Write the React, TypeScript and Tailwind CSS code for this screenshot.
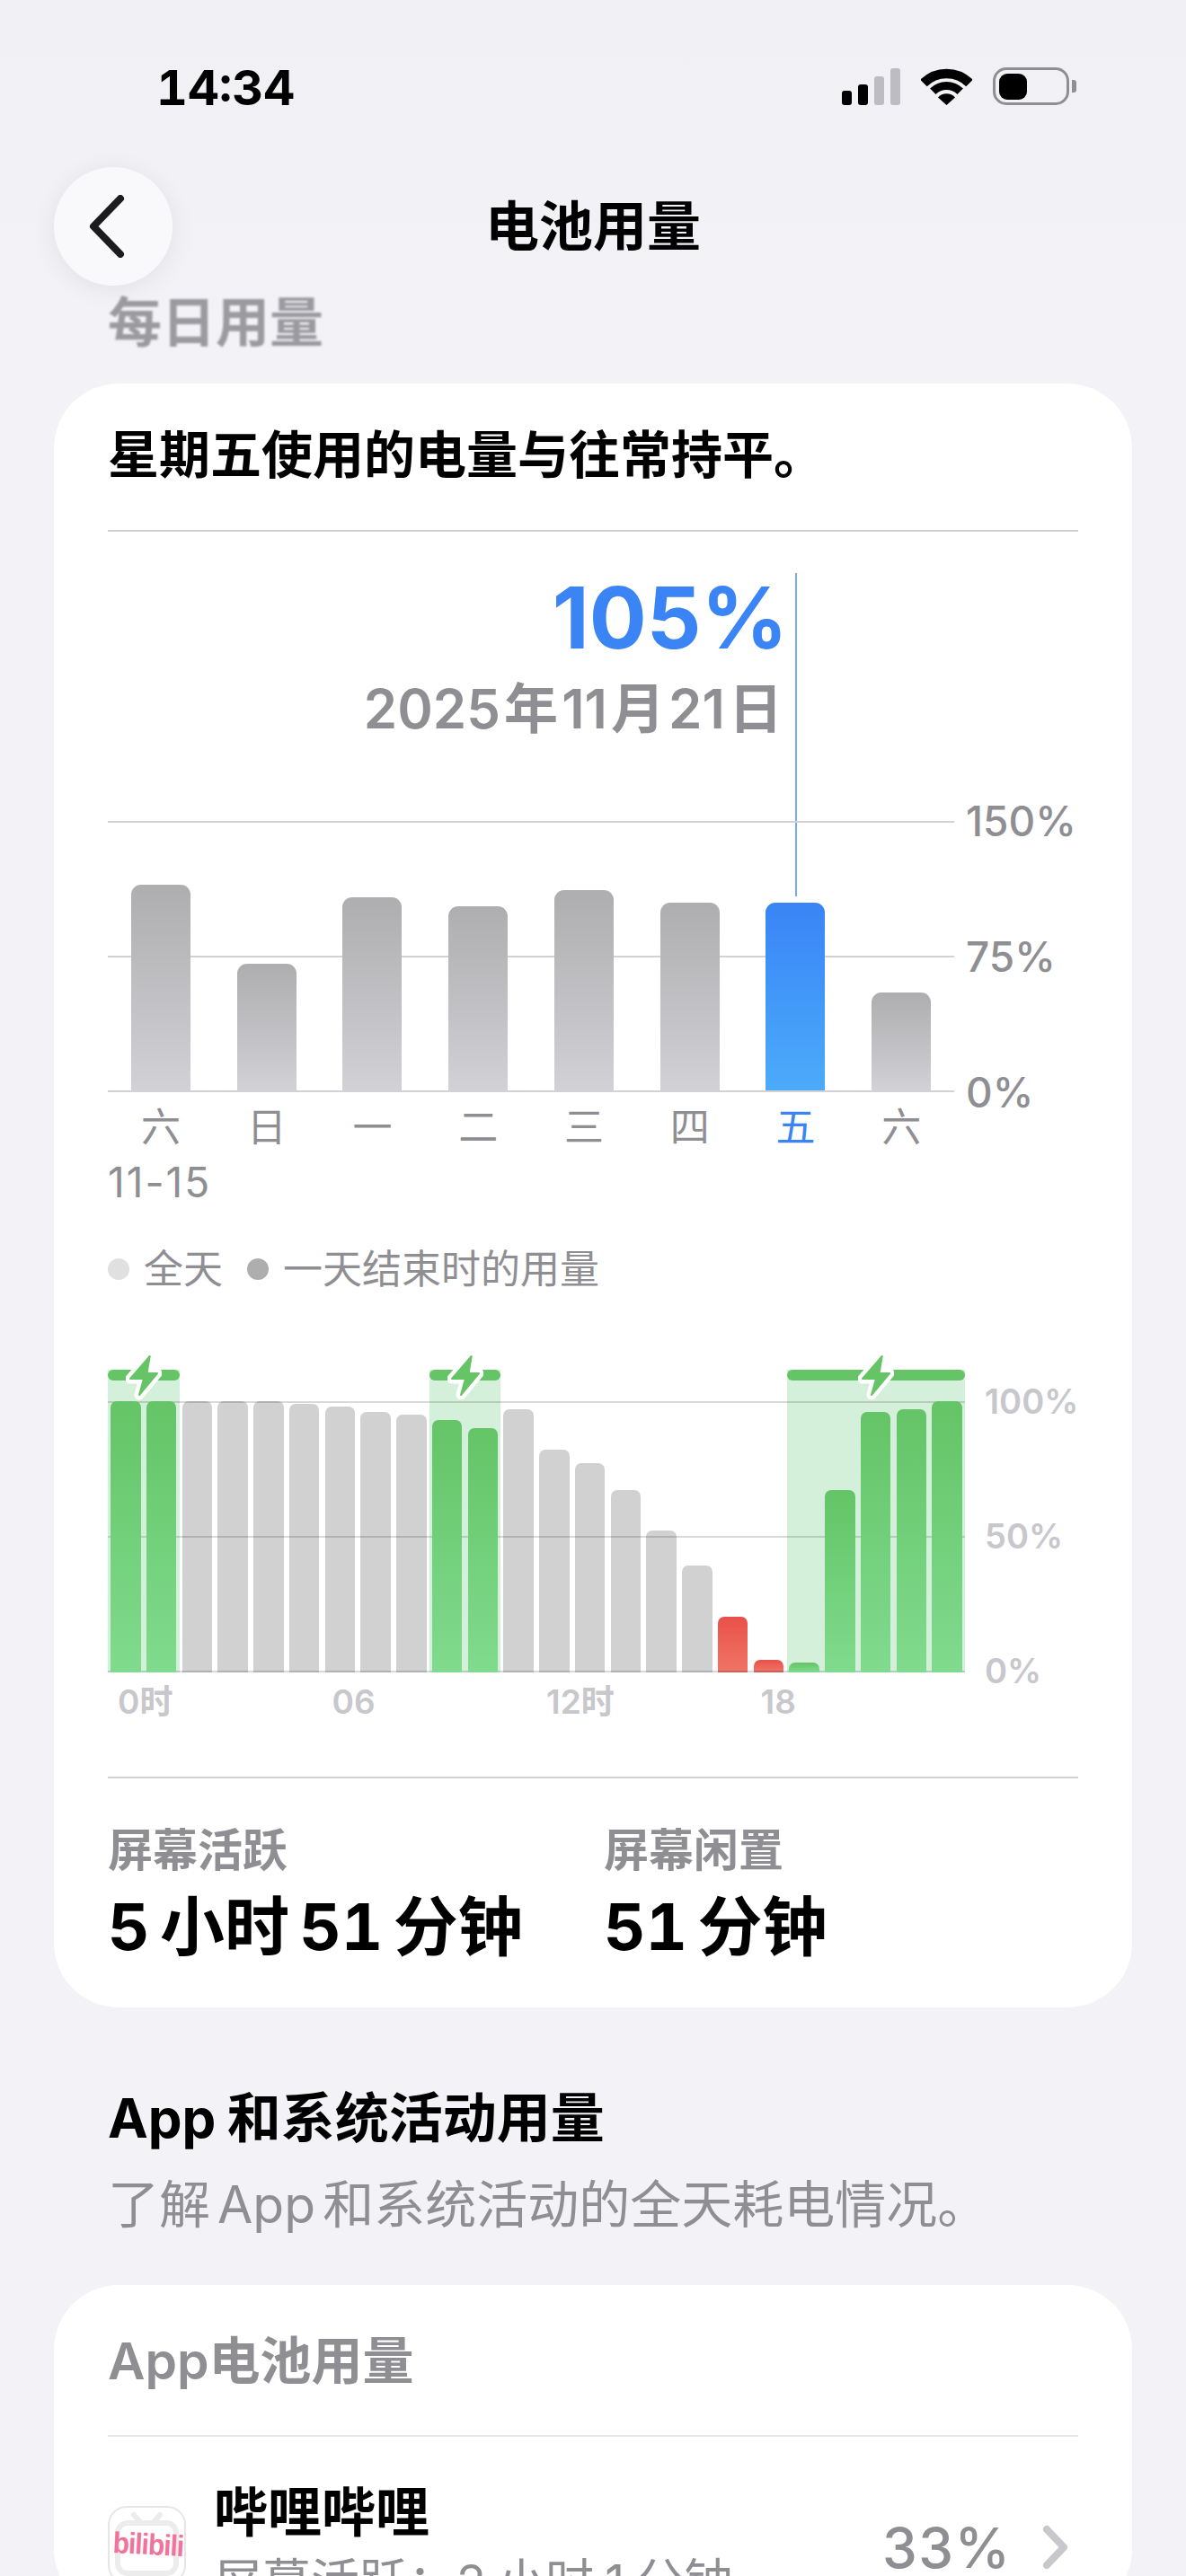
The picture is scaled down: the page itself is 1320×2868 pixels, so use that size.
import React from 'react';

const dayBars = [
  { day: '六', top: 985 },
  { day: '日', top: 1073 },
  { day: '一', top: 999 },
  { day: '二', top: 1009 },
  { day: '三', top: 991 },
  { day: '四', top: 1005 },
  { day: '五', top: 1005, active: true },
  { day: '六', top: 1105 },
];

// kind: g = charging, n = normal, r = low battery
const hourBars: { top: number; kind: 'g' | 'n' | 'r' }[] = [
  { top: 1560, kind: 'g' },
  { top: 1560, kind: 'g' },
  { top: 1560, kind: 'n' },
  { top: 1560, kind: 'n' },
  { top: 1560, kind: 'n' },
  { top: 1563, kind: 'n' },
  { top: 1566, kind: 'n' },
  { top: 1572, kind: 'n' },
  { top: 1575, kind: 'n' },
  { top: 1581, kind: 'g' },
  { top: 1590, kind: 'g' },
  { top: 1569, kind: 'n' },
  { top: 1614, kind: 'n' },
  { top: 1629, kind: 'n' },
  { top: 1659, kind: 'n' },
  { top: 1704, kind: 'n' },
  { top: 1743, kind: 'n' },
  { top: 1800, kind: 'r' },
  { top: 1848, kind: 'r' },
  { top: 1851, kind: 'g' },
  { top: 1659, kind: 'g' },
  { top: 1572, kind: 'g' },
  { top: 1569, kind: 'g' },
  { top: 1560, kind: 'g' },
];

const chargeBands = [
  { left: 0, width: 80 },
  { left: 358, width: 79 },
  { left: 756, width: 198 },
];

function StatusIcons() {
  return (
    <div className="flex items-center">
      <div className="flex items-end gap-[7px] h-[41px]">
        <div className="w-[11px] h-[16px] rounded-[3px] bg-black" />
        <div className="w-[11px] h-[23px] rounded-[3px] bg-black" />
        <div className="w-[11px] h-[32px] rounded-[3px] bg-[#bcbcc2]" />
        <div className="w-[11px] h-[41px] rounded-[3px] bg-[#bcbcc2]" />
      </div>
      <svg width="57" height="42" viewBox="0 0 57 42" className="ml-[23px]">
        <path d="M3 17.5 A36 36 0 0 1 54 17.5" fill="none" stroke="#000" strokeWidth="10.5" />
        <path d="M13.3 26.8 A21.5 21.5 0 0 1 43.7 26.8" fill="none" stroke="#000" strokeWidth="9" />
        <path d="M28.5 42 L19 33.5 A13 13 0 0 1 38 33.5 Z" fill="#000" />
      </svg>
      <div className="ml-[23px] flex items-center">
        <div className="w-[85px] h-[42px] rounded-[15px] border-[3.5px] border-[#8e8e93] flex items-center pl-[4px]">
          <div className="w-[31px] h-[29px] rounded-[9px] bg-black" />
        </div>
        <div className="ml-[3px] w-[5px] h-[14px] rounded-r-[3px] bg-[#8e8e93]" />
      </div>
    </div>
  );
}

function Bolt() {
  return (
    <svg width="40" height="56" viewBox="0 0 40 56">
      <path
        d="M26.7 5 L5 30 L20 30 L15 48 L35 24 L23.5 24 Z"
        fill="#fff"
        stroke="#fff"
        strokeWidth="11"
        strokeLinejoin="round"
      />
      <path
        d="M26.7 5 L5 30 L20 30 L15 48 L35 24 L23.5 24 Z"
        fill="#65c466"
        stroke="#65c466"
        strokeWidth="2"
        strokeLinejoin="round"
      />
    </svg>
  );
}

function DailyChart() {
  return (
    <div className="flex">
      <div className="w-[942px] shrink-0">
        <div className="relative h-[302px] border-b-2 border-[#d1d1d6]">
          <div className="absolute left-0 right-0 top-0 h-[2px] bg-[#d1d1d6]" />
          <div className="absolute left-0 right-0 top-[150px] h-[2px] bg-[#d1d1d6]" />
          <div className="relative grid grid-cols-8 h-[300px] items-end">
            {dayBars.map((bar, i) => (
              <div key={i} className="flex justify-center h-full items-end">
                <div
                  className={
                    bar.active
                      ? 'w-[66px] rounded-t-[11px] bg-linear-to-b from-[#3a84f6] to-[#4cabf9]'
                      : 'w-[66px] rounded-t-[11px] bg-linear-to-b from-[#aeaeb0] to-[#d1d1d6]'
                  }
                  style={{ height: 1214 - bar.top }}
                />
              </div>
            ))}
          </div>
        </div>
        <div className="grid grid-cols-8 mt-[11px] text-[44px] leading-[56px] text-center text-[#8e8e93]">
          {dayBars.map((bar, i) => (
            <div key={i} className={bar.active ? 'text-[#3a84f6]' : ''}>
              {bar.day}
            </div>
          ))}
        </div>
      </div>
      <div className="ml-[13px] h-[302px] flex flex-col justify-between text-[46px] font-medium text-[#8e8e93]">
        <div className="h-0 flex items-center">150%</div>
        <div className="h-0 flex items-center">75%</div>
        <div className="h-0 flex items-center">0%</div>
      </div>
    </div>
  );
}

function HourlyChart() {
  return (
    <div>
      <div className="flex">
        <div className="relative w-[954px] shrink-0 h-[337px]">
          {chargeBands.map((band, i) => (
            <div
              key={i}
              className="absolute top-0 bottom-0 bg-[#d5f0da]"
              style={{ left: band.left, width: band.width }}
            />
          ))}
          {chargeBands.map((band, i) => (
            <div
              key={i}
              className="absolute top-0 h-[12px] rounded-[6px] bg-[#65c466]"
              style={{ left: band.left, width: band.width }}
            />
          ))}
          <div className="absolute left-0 right-0 top-[35px] h-[2px] bg-black/15 z-10" />
          <div className="absolute left-0 right-0 top-[185px] h-[2px] bg-black/15 z-10" />
          <div className="absolute left-0 right-0 bottom-0 h-[2px] bg-black/15 z-10" />
          <div className="absolute left-0 right-0 bottom-0 grid grid-cols-24 h-[302px]">
            {hourBars.map((bar, i) => (
              <div key={i} className="flex justify-center items-end h-full">
                <div
                  className={
                    bar.kind === 'g'
                      ? 'relative z-20 w-[33.5px] rounded-t-[7px] bg-linear-to-b from-[#64c466] to-[#80db8e]'
                      : bar.kind === 'r'
                        ? 'w-[33.5px] rounded-t-[7px] bg-linear-to-b from-[#e9504a] to-[#ef7566]'
                        : 'w-[33.5px] rounded-t-[7px] bg-[#d1d1d1]'
                  }
                  style={{ height: 1862 - bar.top }}
                />
              </div>
            ))}
          </div>
          {chargeBands.map((band, i) => (
            <div
              key={i}
              className="absolute -top-[20px] z-30"
              style={{ left: band.left + band.width / 2 - 20 }}
            >
              <Bolt />
            </div>
          ))}
        </div>
        <div className="ml-[22px] mt-[35px] h-[300px] flex flex-col justify-between text-[38px] font-semibold text-[#c7c7cc]">
          <div className="h-0 flex items-center">100%</div>
          <div className="h-0 flex items-center">50%</div>
          <div className="h-0 flex items-center">0%</div>
        </div>
      </div>
      <div className="grid grid-cols-[repeat(4,238.5px)] mt-[11px] pl-[11px] text-[37px] leading-[44px] font-semibold text-[#c7c7cc]">
        <div>0时</div>
        <div>06</div>
        <div>12时</div>
        <div>18</div>
      </div>
    </div>
  );
}

function BiliIcon() {
  return (
    <div className="relative -mt-[6px] w-[87px] h-[87px] shrink-0 rounded-[21px] border-2 border-[#e6e6e6] bg-white overflow-hidden">
      <svg width="87" height="87" viewBox="0 0 87 87" className="absolute -left-[2px] -top-[2px]">
        <rect x="11" y="19" width="65" height="56" rx="11" fill="none" stroke="#ececec" strokeWidth="6" />
        <path d="M29 10 L37 19 M58 10 L50 19" stroke="#ececec" strokeWidth="6" strokeLinecap="round" />
      </svg>
      <div className="absolute left-[3px] top-[25px] w-[80px] text-center rotate-[3deg] text-[#f0739c] text-[30px] leading-[32px] font-bold tracking-[-1px] [font-family:'Liberation_Sans',sans-serif] scale-y-110">
        bilibili
      </div>
    </div>
  );
}

export default function App() {
  return (
    <div className="w-[1320px] h-[2868px] overflow-hidden bg-[#f2f2f7] [font-family:Inter,'Noto_Sans_CJK_SC',sans-serif]">
      <div className="bg-linear-to-b from-[#f0f0f5] to-[#f2f2f7]">
        {/* Status bar */}
        <div className="h-[186px] pt-[75px] pl-[174px] pr-[122px] flex justify-between items-start">
          <div className="text-[54px] leading-[46px] font-bold tabular-nums text-black">14:34</div>
          <StatusIcons />
        </div>

        {/* Nav */}
        <div className="mx-[60px] grid grid-cols-[132px_1fr_132px] items-center h-[132px]">
          <div className="w-[132px] h-[132px] rounded-full bg-[#f9f9fc] shadow-[0_4px_28px_rgba(0,0,0,0.07)] flex items-center justify-center">
            <svg width="44" height="70" viewBox="0 0 44 70" fill="none" className="mr-[12px]">
              <path d="M36 4 L6 35 L36 66" stroke="#1c1c1e" strokeWidth="8" strokeLinecap="round" strokeLinejoin="round" />
            </svg>
          </div>
          <div className="text-center text-[60px] leading-[70px] font-bold text-black">电池用量</div>
        </div>

        <div className="px-[120px] text-[60px] leading-[82px] font-bold text-[#9a9a9f] blur-[1px]">每日用量</div>
      </div>

      {/* Daily usage card */}
      <div className="mt-[27px] mx-[60px] px-[60px] pt-[40px] pb-[50px] rounded-[72px] bg-white">
        <div className="text-[57px] leading-[80px] font-bold text-black">星期五使用的电量与往常持平。</div>
        <div className="mt-[43px] h-[2px] bg-[#d1d1d6]" />

        <div className="relative pt-[46px]">
          <div className="absolute left-[765px] top-[46px] w-[2px] h-[360px] bg-[#74abf7]" />
          <div className="w-[757px] flex flex-col items-end">
            <div className="text-[95px] leading-[100px] font-bold text-[#3a84f6]">105%</div>
            <div className="mt-[16px] pr-[6px] text-[60px] leading-[70px] font-semibold text-[#8e8e93] [word-spacing:-11px]">2025 年 11 月 21 日</div>
          </div>
          <div className="mt-[90px]">
            <DailyChart />
          </div>
        </div>

        <div className="mt-[8px] text-[46px] leading-[50px] tracking-[2px] text-[#8e8e93]">11-15</div>

        <div className="mt-[44px] flex items-center text-[44px] leading-[56px] text-[#8e8e93]">
          <div className="w-[24px] h-[24px] rounded-full bg-[#e0e0e0]" />
          <div className="ml-[16px]">全天</div>
          <div className="ml-[27px] w-[24px] h-[24px] rounded-full bg-[#aeaeae]" />
          <div className="ml-[16px]">一天结束时的用量</div>
        </div>

        <div className="mt-[84px]">
          <HourlyChart />
        </div>

        <div className="mt-[61px] h-[2px] bg-[#d1d1d6]" />

        <div className="mt-[50px] flex">
          <div className="w-[552px]">
            <div className="text-[50px] leading-[60px] font-semibold text-[#8e8e93]">屏幕活跃</div>
            <div className="mt-[15px] text-[72px] leading-[80px] font-bold tabular-nums text-black [word-spacing:-8px]">5 小时 51 分钟</div>
          </div>
          <div>
            <div className="text-[50px] leading-[60px] font-semibold text-[#8e8e93]">屏幕闲置</div>
            <div className="mt-[15px] text-[72px] leading-[80px] font-bold tabular-nums text-black [word-spacing:-8px]">51 分钟</div>
          </div>
        </div>
      </div>

      {/* App and system activity */}
      <div className="mt-[85px] px-[120px] text-[60px] leading-[76px] font-bold text-black [word-spacing:-2px]">App 和系统活动用量</div>
      <div className="mt-[23px] px-[120px] text-[57px] leading-[72px] text-[#8e8e93] [word-spacing:-8px]">了解 App 和系统活动的全天耗电情况。</div>

      <div className="mt-[53px] mx-[60px] px-[60px] pt-[50px] rounded-[72px] bg-white">
        <div className="text-[57px] leading-[70px] font-semibold text-[#8e8e93]">App电池用量</div>
        <div className="mt-[47px] h-[2px] bg-[#e5e5ea]" />
        <div className="mt-[49px] flex items-center">
          <BiliIcon />
          <div className="ml-[31px] flex-1">
            <div className="text-[60px] leading-[70px] font-semibold text-black">哔哩哔哩</div>
            <div className="mt-[8px] text-[54px] leading-[70px] text-[#8e8e93] [word-spacing:-3px]">屏幕活跃：2 小时 1 分钟</div>
          </div>
          <div className="text-[62px] font-medium tabular-nums text-[#8e8e93]">33%</div>
          <svg width="30" height="50" viewBox="0 0 30 50" fill="none" className="ml-[36px] mr-[10px]">
            <path d="M5 5 L24 25 L5 45" stroke="#c7c7cc" strokeWidth="8" strokeLinecap="round" strokeLinejoin="round" />
          </svg>
        </div>
      </div>
    </div>
  );
}
